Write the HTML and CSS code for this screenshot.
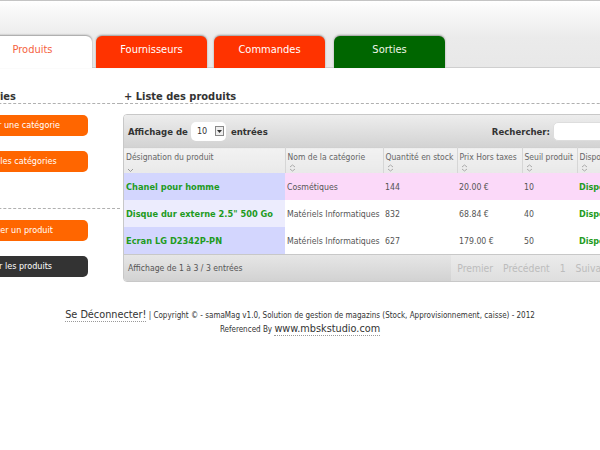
FILE: index.html
```html
<!DOCTYPE html>
<html lang="fr">
<head>
<meta charset="utf-8">
<title>samaMag - Produits</title>
<link rel="stylesheet" href="styles.css">
</head>
<body>
<header class="top">
  <nav class="tabs">
    <a class="tab tab-active">Produits</a>
    <a class="tab tab-red">Fournisseurs</a>
    <a class="tab tab-red">Commandes</a>
    <a class="tab tab-green">Sorties</a>
  </nav>
</header>
<div class="main">
  <aside class="sidebar">
    <h2 class="title">+ Catégories</h2>
    <div class="group">
      <a class="btn btn-orange">Ajouter une catégorie</a>
      <a class="btn btn-orange">Lister les catégories</a>
    </div>
    <div class="group group-sep">
      <a class="btn btn-orange">Ajouter un produit</a>
      <a class="btn btn-dark">Lister les produits</a>
    </div>
  </aside>
  <section class="content">
    <h2 class="title title-pad">+ Liste des produits</h2>
    <div class="grid-box">
      <div class="toolbar">
        <div class="tool-left">Affichage de
          <span class="sel"><span class="sel-val">10</span><span class="sel-btn"><svg width="5" height="3" viewBox="0 0 5 3"><path d="M0 0h5L2.5 3z" fill="#333"/></svg></span></span>
          entrées</div>
        <div class="tool-right">Rechercher: <span class="search"></span></div>
      </div>
      <table class="grid">
        <colgroup>
          <col class="c1"><col class="c2"><col class="c3"><col class="c4"><col class="c5"><col class="c6">
        </colgroup>
        <thead>
          <tr>
            <th>Désignation du produit<span class="sort"><svg width="7" height="4" viewBox="0 0 7 4"><path d="M1 1l2.5 2.5L6 1" fill="none" stroke="#999" stroke-width="1"/></svg></span></th>
            <th>Nom de la catégorie<span class="sort"><svg width="7" height="8" viewBox="0 0 7 8"><path d="M1 3l2.5-2L6 3M1 5l2.5 2L6 5" fill="none" stroke="#aaa" stroke-width="1"/></svg></span></th>
            <th>Quantité en stock<span class="sort"><svg width="7" height="8" viewBox="0 0 7 8"><path d="M1 3l2.5-2L6 3M1 5l2.5 2L6 5" fill="none" stroke="#aaa" stroke-width="1"/></svg></span></th>
            <th>Prix Hors taxes<span class="sort"><svg width="7" height="8" viewBox="0 0 7 8"><path d="M1 3l2.5-2L6 3M1 5l2.5 2L6 5" fill="none" stroke="#aaa" stroke-width="1"/></svg></span></th>
            <th>Seuil produit<span class="sort"><svg width="7" height="8" viewBox="0 0 7 8"><path d="M1 3l2.5-2L6 3M1 5l2.5 2L6 5" fill="none" stroke="#aaa" stroke-width="1"/></svg></span></th>
            <th>Disponibilité<span class="sort"><svg width="7" height="8" viewBox="0 0 7 8"><path d="M1 3l2.5-2L6 3M1 5l2.5 2L6 5" fill="none" stroke="#aaa" stroke-width="1"/></svg></span></th>
          </tr>
        </thead>
        <tbody>
          <tr class="odd hl">
            <td class="name">Chanel pour homme</td>
            <td>Cosmétiques</td>
            <td>144</td>
            <td>20.00 €</td>
            <td>10</td>
            <td class="dispo">Disponible</td>
          </tr>
          <tr class="even">
            <td class="name">Disque dur externe 2.5" 500 Go</td>
            <td>Matériels Informatiques</td>
            <td>832</td>
            <td>68.84 €</td>
            <td>40</td>
            <td class="dispo">Disponible</td>
          </tr>
          <tr class="odd">
            <td class="name">Ecran LG D2342P-PN</td>
            <td>Matériels Informatiques</td>
            <td>627</td>
            <td>179.00 €</td>
            <td>50</td>
            <td class="dispo">Disponible</td>
          </tr>
        </tbody>
      </table>
      <div class="foot">
        <div class="info">Affichage de 1 à 3 / 3 entrées</div>
        <div class="pager"><span>Premier</span><span>Précédent</span><span>1</span><span>Suivant</span><span>Dernier</span></div>
      </div>
    </div>
  </section>
</div>
<footer class="page-foot">
  <p><a class="big">Se Déconnecter!</a> | Copyright © - samaMag v1.0, Solution de gestion de magazins (Stock, Approvisionnement, caisse) - 2012</p>
  <p>Referenced By <a class="big">www.mbskstudio.com</a></p>
</footer>
</body>
</html>
```

FILE: styles.css
```css
html, body {
  margin: 0;
  padding: 0;
  overflow: hidden;
}
body {
  width: 600px;
  background: #fff;
  color: #333;
  font-family: "DejaVu Sans Condensed", "DejaVu Sans", sans-serif;
}

/* header */
.top {
  height: 66px;
  border-top: 1px solid #c4c4c4;
  border-bottom: 1px solid #cfcfcf;
  background: linear-gradient(#ffffff 0, #f9f9f9 8px, #ebebeb 36px, #e8e8e8 100%);
  display: flex;
  align-items: flex-end;
}
.tabs {
  display: flex;
  margin-left: -19px;
  margin-bottom: -1px;
}
.tab {
  width: 111px;
  height: 32px;
  box-sizing: border-box;
  padding-top: 7px;
  border-radius: 6px 6px 0 0;
  font-size: 11px;
  line-height: 14px;
  text-align: center;
  color: #fff;
  margin-right: 7px;
  box-shadow: 0 -1px 2px rgba(0, 0, 0, 0.35);
}
.tab-active {
  background: #fff;
  color: #f5623f;
  padding-right: 8px;
  margin-right: 4px;
}
.tab-red { background: #ff3300; }
.tab-green { background: #006600; margin-left: 2px; color: #f2f6e8; }

/* main */
.main {
  display: flex;
  margin-left: -56px;
  padding-top: 22px;
}
.sidebar {
  width: 176px;
  flex: none;
}
.title {
  margin: 0;
  font-size: 11px;
  line-height: 13px;
  font-weight: bold;
  color: #333;
  border-bottom: 1px dashed #b0b0b0;
}
.title-pad { padding-left: 4px; }

.group {
  display: flex;
  flex-direction: column;
  gap: 15px;
  margin-top: 11px;
}
.group-sep {
  margin-top: 36px;
  padding-top: 11px;
  border-top: 1px dashed #b0b0b0;
}
.btn {
  display: block;
  width: 144px;
  height: 21px;
  line-height: 21px;
  border-radius: 5px;
  font-size: 9px;
  color: #fff;
  text-align: center;
}
.btn-orange { background: #ff6600; }
.btn-dark { background: #333333; }

.content {
  width: 560px;
  flex: none;
}
.grid-box {
  margin: 10px 0 0 3px;
  width: 557px;
  border: 1px solid #c8c8c8;
  border-radius: 4px;
  overflow: hidden;
}
.toolbar {
  height: 32px;
  display: flex;
  align-items: center;
  justify-content: space-between;
  padding: 0 8px 0 4px;
  background: linear-gradient(#ededed, #d3d3d3);
  font-size: 9.5px;
  font-weight: bold;
  color: #333;
}
.tool-left, .tool-right {
  display: flex;
  align-items: center;
}
.sel {
  display: inline-flex;
  align-items: center;
  justify-content: space-between;
  box-sizing: border-box;
  width: 35px;
  height: 19px;
  margin: 0 5px 0 3px;
  padding: 0 2px 0 6px;
  background: #fff;
  border-radius: 5px;
  font-weight: normal;
  font-size: 9px;
  color: #333;
}
.sel-btn {
  display: inline-flex;
  align-items: center;
  justify-content: center;
  width: 7px;
  height: 8px;
  border: 1px solid #888;
  background: #eee;
}
.search {
  display: inline-block;
  width: 120px;
  height: 19px;
  margin-left: 3px;
  background: #fff;
  border-radius: 5px;
  border: 1px solid #ddd;
  box-sizing: border-box;
}

.grid {
  width: 100%;
  border-collapse: collapse;
  table-layout: fixed;
}
.c1 { width: 161px; }
.c2 { width: 98px; }
.c3 { width: 74px; }
.c4 { width: 65px; }
.c5 { width: 55px; }
.c6 { width: auto; }
.grid th {
  height: 25px;
  box-sizing: border-box;
  padding: 3px 2px 0 2px;
  text-align: left;
  vertical-align: top;
  font-weight: normal;
  font-size: 8.5px;
  line-height: 12px;
  color: #666;
  white-space: nowrap;
  overflow: hidden;
  background: linear-gradient(#f2f2f2, #e9e9e9);
  border-top: 1px solid #d0d0d0;
  border-right: 1px solid #d6d6d6;
}
.sort {
  display: block;
  height: 10px;
  padding-left: 1px;
}
.grid td {
  height: 27px;
  padding: 0 2px;
  font-size: 8.7px;
  color: #555;
  white-space: nowrap;
  overflow: hidden;
  background: #fff;
}
.grid td.name {
  font-size: 9.2px;
  font-weight: bold;
  color: #1e9b1e;
}
.grid tr.odd td.name { background: #d3d6fe; }
.grid tr.even td.name { background: #ececfd; }
.grid tr.hl td { background: #fbd9f9; }
.grid tr.hl td.name { background: #d3d6fe; }
.grid td.dispo {
  font-size: 9px;
  font-weight: bold;
  color: #1e9b1e;
}

.foot {
  height: 26px;
  display: flex;
  align-items: center;
  justify-content: space-between;
  padding: 0 0 0 4px;
  background: linear-gradient(#e6e6e6, #d2d2d2);
  border-top: 1px solid #c8c8c8;
}
.info {
  font-size: 8.6px;
  color: #555;
}
.pager {
  display: flex;
  align-items: center;
  gap: 10px;
  height: 100%;
  padding: 0 26px 0 6px;
  background: linear-gradient(#ebebeb, #dedede);
  font-size: 10.3px;
  color: #bcbcbc;
}

.page-foot {
  margin-top: 26px;
  text-align: center;
  font-size: 8px;
  line-height: 13px;
  color: #333;
}
.page-foot p { margin: 0; }
.big {
  font-size: 10.8px;
  color: #333;
  border-bottom: 1px dotted #999;
}
```
